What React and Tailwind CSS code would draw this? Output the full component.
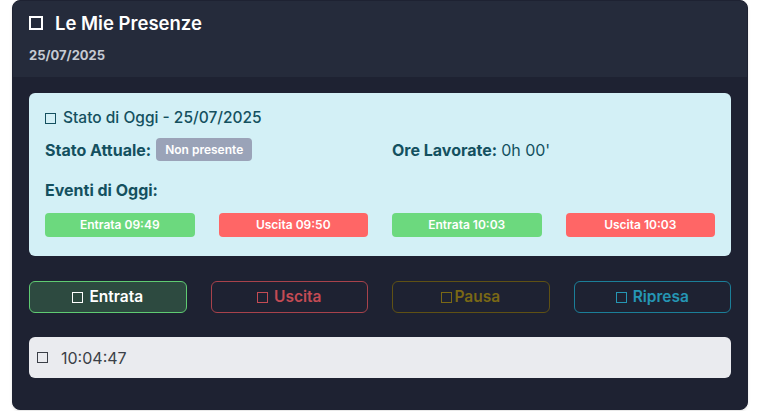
import React from "react";

function Box({ className }) {
  return <span className={"inline-block shrink-0 border-2 " + className} />;
}

const events = [
  { label: "Entrata 09:49", color: "bg-[#6cd97e]" },
  { label: "Uscita 09:50", color: "bg-[#ff6666]" },
  { label: "Entrata 10:03", color: "bg-[#6cd97e]" },
  { label: "Uscita 10:03", color: "bg-[#ff6666]" },
];

const actions = [
  {
    label: "Entrata",
    cls: "bg-[#2d4a40] border-[#5fcb72] text-white",
    box: "border-white",
    gap: "gap-1.5",
  },
  {
    label: "Uscita",
    cls: "border-[#a8424b] text-[#c44b54]",
    box: "border-[#c44b54]",
    gap: "gap-1.5",
  },
  {
    label: "Pausa",
    cls: "border-[#5f5114] text-[#7a6815]",
    box: "border-[#7a6815]",
    gap: "gap-0.5",
  },
  {
    label: "Ripresa",
    cls: "border-[#1b7f99] text-[#2596b4]",
    box: "border-[#2596b4]",
    gap: "gap-1.5",
  },
];

export default function App() {
  return (
    <div className="w-[760px] h-[411px] bg-white font-['Inter',sans-serif]">
      <div className="ml-3 w-[736px] h-[410px] rounded-lg overflow-hidden bg-[#1e2232] border border-[#1e2232] shadow-sm">
        <div className="bg-[#252b3b] px-4 pt-2 pb-3">
          <div className="flex items-center gap-3 h-7">
            <Box className="w-[14px] h-[14px] border-white" />
            <span className="text-[18.5px] font-semibold text-white leading-7">
              Le Mie Presenze
            </span>
          </div>
          <div className="mt-2 text-[13px] font-bold text-[#c6cad3] leading-5">
            25/07/2025
          </div>
        </div>

        <div className="px-4 pt-4">
          <div className="rounded-md bg-[#d3f0f6] px-4 pt-4 pb-[19px] text-[#14505f]">
            <div className="flex items-center gap-[7px] h-[18px] text-[15.5px] font-medium">
              <Box className="w-[11px] h-[11px] border-[#14505f] border-[1.5px]" />
              <span>Stato di Oggi - 25/07/2025</span>
            </div>
            <div className="mt-[11px] grid grid-cols-2 gap-6 text-[16px]">
              <div className="flex items-center h-[23px] gap-[5px]">
                <span className="font-bold">Stato Attuale:</span>
                <span className="rounded bg-[#9aa3b8] px-[9px] h-[23px] flex items-center text-[12px] font-semibold text-white">
                  Non presente
                </span>
              </div>
              <div className="flex items-center h-[23px] gap-1">
                <span className="font-bold">Ore Lavorate:</span>
                <span>0h 00'</span>
              </div>
            </div>
            <div className="mt-[18px] h-[22px] flex items-center text-[16px] font-bold">
              Eventi di Oggi:
            </div>
            <div className="mt-3 grid grid-cols-4 gap-6">
              {events.map((e) => (
                <div
                  key={e.label}
                  className={
                    "h-6 rounded-sm flex items-center justify-center text-[12px] font-semibold text-white " +
                    e.color
                  }
                >
                  {e.label}
                </div>
              ))}
            </div>
          </div>

          <div className="mt-[25px] grid grid-cols-4 gap-6">
            {actions.map((a) => (
              <div
                key={a.label}
                className={
                  "h-8 rounded-md border flex items-center justify-center text-[15.5px] font-semibold " +
                  a.cls +
                  " " +
                  a.gap
                }
              >
                <Box className={"w-[11px] h-[11px] border-[1.5px] " + a.box} />
                <span>{a.label}</span>
              </div>
            ))}
          </div>

          <div className="mt-6 h-[41px] rounded-md bg-[#eaebef] flex items-center px-2 gap-[13px] text-[16px] text-[#3b3f47]">
            <Box className="w-[11px] h-[11px] border-[1.5px] border-[#3b3f47]" />
            <span>10:04:47</span>
          </div>
        </div>
      </div>
    </div>
  );
}
